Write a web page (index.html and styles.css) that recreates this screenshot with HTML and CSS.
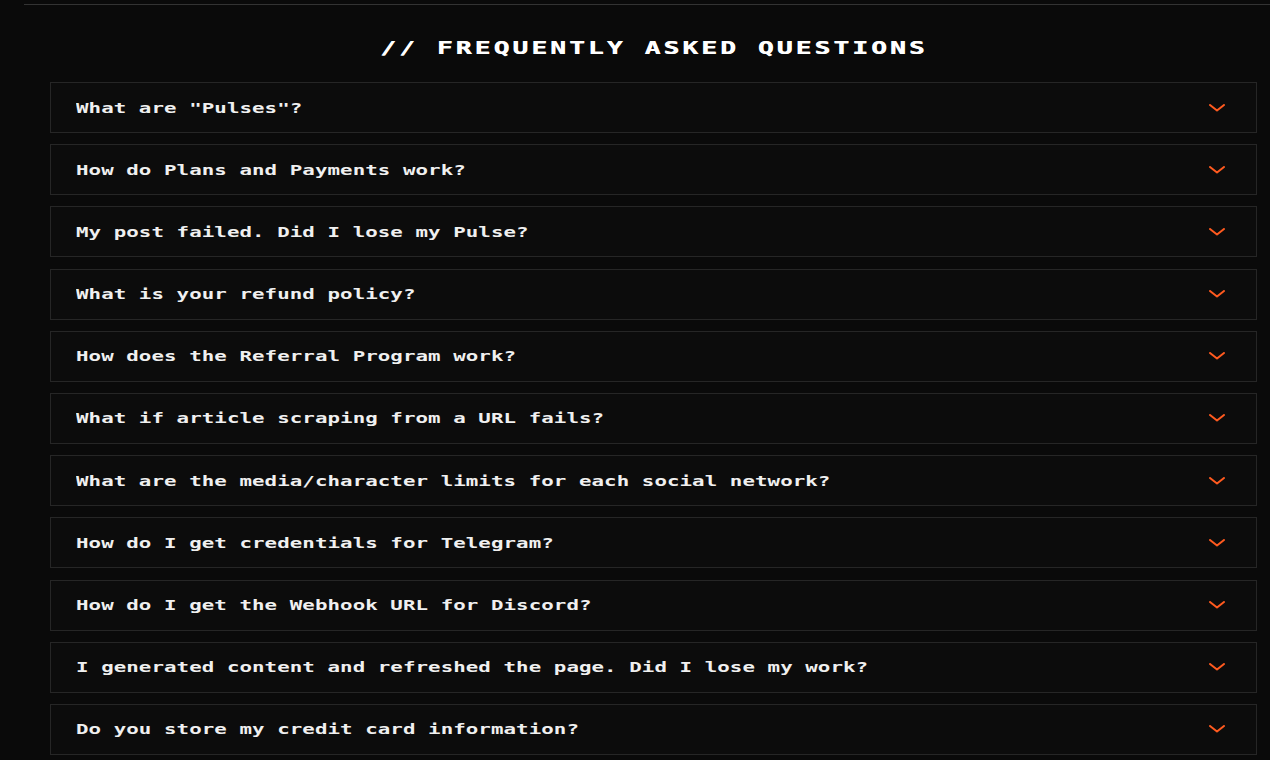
FILE: index.html
```html
<!DOCTYPE html>
<html lang="en">
<head>
<meta charset="utf-8">
<title>FAQ</title>
<link rel="stylesheet" href="styles.css">
</head>
<body>
<section class="faq">
  <h2 class="faq-title"><span class="faq-title-text">// FREQUENTLY ASKED QUESTIONS</span></h2>
  <div class="faq-list">
    <div class="faq-item"><span class="q">What are "Pulses"?</span><svg class="chev" width="16" height="8" viewBox="0 0 16 8"><polyline points="1,1 8,6.5 15,1"/></svg></div>
    <div class="faq-item"><span class="q">How do Plans and Payments work?</span><svg class="chev" width="16" height="8" viewBox="0 0 16 8"><polyline points="1,1 8,6.5 15,1"/></svg></div>
    <div class="faq-item"><span class="q">My post failed. Did I lose my Pulse?</span><svg class="chev" width="16" height="8" viewBox="0 0 16 8"><polyline points="1,1 8,6.5 15,1"/></svg></div>
    <div class="faq-item"><span class="q">What is your refund policy?</span><svg class="chev" width="16" height="8" viewBox="0 0 16 8"><polyline points="1,1 8,6.5 15,1"/></svg></div>
    <div class="faq-item"><span class="q">How does the Referral Program work?</span><svg class="chev" width="16" height="8" viewBox="0 0 16 8"><polyline points="1,1 8,6.5 15,1"/></svg></div>
    <div class="faq-item"><span class="q">What if article scraping from a URL fails?</span><svg class="chev" width="16" height="8" viewBox="0 0 16 8"><polyline points="1,1 8,6.5 15,1"/></svg></div>
    <div class="faq-item"><span class="q">What are the media/character limits for each social network?</span><svg class="chev" width="16" height="8" viewBox="0 0 16 8"><polyline points="1,1 8,6.5 15,1"/></svg></div>
    <div class="faq-item"><span class="q">How do I get credentials for Telegram?</span><svg class="chev" width="16" height="8" viewBox="0 0 16 8"><polyline points="1,1 8,6.5 15,1"/></svg></div>
    <div class="faq-item"><span class="q">How do I get the Webhook URL for Discord?</span><svg class="chev" width="16" height="8" viewBox="0 0 16 8"><polyline points="1,1 8,6.5 15,1"/></svg></div>
    <div class="faq-item"><span class="q">I generated content and refreshed the page. Did I lose my work?</span><svg class="chev" width="16" height="8" viewBox="0 0 16 8"><polyline points="1,1 8,6.5 15,1"/></svg></div>
    <div class="faq-item"><span class="q">Do you store my credit card information?</span><svg class="chev" width="16" height="8" viewBox="0 0 16 8"><polyline points="1,1 8,6.5 15,1"/></svg></div>
  </div>
</section>
</body>
</html>
```
FILE: styles.css
```css
html, body {
  margin: 0;
  padding: 0;
  background: #0a0a0a;
  overflow: hidden;
}
body {
  font-family: "DejaVu Sans Mono", "Liberation Mono", monospace;
  color: #f2f2f2;
  width: 1270px;
  height: 760px;
}
.faq {
  margin: 4px 0 0 24px;
  border-top: 1px solid #333333;
  padding: 29px 13px 0 26px;
}
.faq-title {
  margin: 0 0 20px;
  font-size: 18px;
  line-height: 28px;
  font-weight: 700;
  text-align: center;
  color: #ffffff;
}
.faq-title-text {
  display: inline-block;
  letter-spacing: 2.05px;
  transform: scaleX(1.465);
  transform-origin: center center;
  text-shadow: 0.4px 0 0 #ffffff;
}
.faq-list {
  display: flex;
  flex-direction: column;
  gap: 11.2px;
}
.faq-item {
  box-sizing: border-box;
  height: 51px;
  border: 1px solid #262626;
  background: #0c0c0c;
  display: flex;
  align-items: center;
  justify-content: space-between;
  padding: 0 31px 0 25px;
}
.q {
  display: inline-block;
  font-size: 14px;
  line-height: 20px;
  font-weight: 700;
  letter-spacing: 0.05px;
  color: #f0f0f0;
  white-space: nowrap;
  transform: scaleX(1.483);
  transform-origin: left center;
}
.chev {
  display: block;
  fill: none;
  stroke: #ff5a1f;
  stroke-width: 2;
  stroke-linecap: round;
  stroke-linejoin: round;
}
```
